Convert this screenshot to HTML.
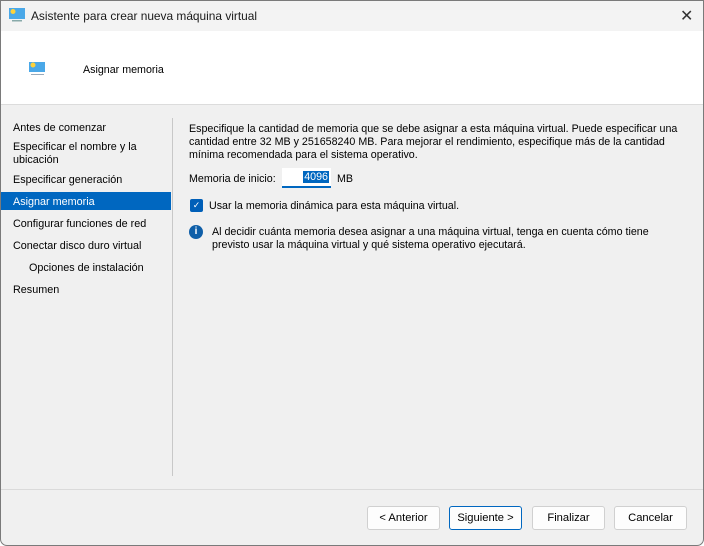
<!DOCTYPE html>
<html><head><meta charset="utf-8"><style>
*{margin:0;padding:0;box-sizing:border-box}
body{width:704px;height:546px;background:#fff;font-family:"Liberation Sans",sans-serif;font-size:11px;color:#000;position:relative;overflow:hidden}
.win{position:absolute;left:0;top:0;width:704px;height:546px;border:1px solid #7a7a7a;border-radius:0 0 7px 7px;background:#f0f0f0;overflow:hidden}
.title{position:absolute;left:0;top:0;width:702px;height:30px;background:#f3f3f3}
.title span{position:absolute;left:30px;top:8px;font-size:11.9px;color:#1a1a1a}
.close{position:absolute;left:679px;top:5px;font-size:16px;color:#333}
.hdr{position:absolute;left:0;top:30px;width:702px;height:74px;background:#fff;border-bottom:1px solid #dcdcdc}
.hdr span{position:absolute;left:82px;top:33px;font-size:10.7px}
.nav div{position:absolute;left:12px;white-space:nowrap;font-size:10.8px}
.sel{position:absolute;left:0;top:191px;width:170px;height:18px;background:#0067c0}
.vl{position:absolute;left:171px;top:117px;width:1px;height:358px;background:#c8c8c8}
.hl{position:absolute;left:0;top:488px;width:702px;height:1px;background:#dadada}
.p{position:absolute;left:188px;white-space:nowrap;font-size:10.7px}
.btn{position:absolute;top:505px;height:24px;width:73px;background:#fdfdfd;border:1px solid #d0d0d0;border-radius:3px;text-align:center;line-height:22px;font-size:11.2px}
</style></head><body><div class="win">
<div class="title">
<svg style="position:absolute;left:8px;top:7px" width="17" height="15"><rect x="0" y="0" width="16" height="11" fill="#4aa8e8"/><circle cx="4" cy="3.5" r="2.5" fill="#ffd23a"/><rect x="3" y="12" width="10" height="1.5" fill="#8aa"/></svg>
<span>Asistente para crear nueva máquina virtual</span><div class="close">✕</div></div>
<div class="hdr"><svg style="position:absolute;left:28px;top:31px" width="17" height="14"><rect x="0" y="0" width="16" height="10" fill="#4aa8e8"/><circle cx="4" cy="3" r="2.5" fill="#ffd23a"/><rect x="2" y="12" width="13" height="1" fill="#9ab"/></svg><span>Asignar memoria</span></div>
<div class="sel"></div>
<div class="nav">
<div style="top:121px">Antes de comenzar</div>
<div style="top:140px">Especificar el nombre y la</div>
<div style="top:153px">ubicación</div>
<div style="top:173px">Especificar generación</div>
<div style="top:195px;color:#fff">Asignar memoria</div>
<div style="top:217px">Configurar funciones de red</div>
<div style="top:239px">Conectar disco duro virtual</div>
<div style="top:261px;left:28px">Opciones de instalación</div>
<div style="top:283px">Resumen</div>
</div>
<div class="vl"></div>
<div class="p" style="top:122px">Especifique la cantidad de memoria que se debe asignar a esta máquina virtual. Puede especificar una</div>
<div class="p" style="top:135px">cantidad entre 32 MB y 251658240 MB. Para mejorar el rendimiento, especifique más de la cantidad</div>
<div class="p" style="top:148px">mínima recomendada para el sistema operativo.</div>
<div class="p" style="top:172px">Memoria de inicio:</div>
<div style="position:absolute;left:281px;top:167px;width:49px;height:20px;background:#fff;border-bottom:2px solid #0067c0"><span style="position:absolute;right:2px;top:3px;background:#0067c0;color:#fff;padding:0 1px;font-size:10.7px">4096</span></div>
<div class="p" style="left:336px;top:172px">MB</div>
<div style="position:absolute;left:189px;top:198px;width:13px;height:13px;background:#005fb8;border-radius:2px;color:#fff;font-size:9px;text-align:center;line-height:13px">✓</div>
<div class="p" style="left:208px;top:199px">Usar la memoria dinámica para esta máquina virtual.</div>
<div style="position:absolute;left:188px;top:224px;width:14px;height:14px;border-radius:50%;background:#0f5fa8;color:#fff;font-weight:bold;font-size:10px;text-align:center;line-height:14px">i</div>
<div class="p" style="left:211px;top:225px">Al decidir cuánta memoria desea asignar a una máquina virtual, tenga en cuenta cómo tiene</div>
<div class="p" style="left:211px;top:238px">previsto usar la máquina virtual y qué sistema operativo ejecutará.</div>
<div class="hl"></div>
<div class="btn" style="left:366px">&lt; Anterior</div>
<div class="btn" style="left:448px;border-color:#0067c0">Siguiente &gt;</div>
<div class="btn" style="left:531px">Finalizar</div>
<div class="btn" style="left:613px">Cancelar</div>
</div></body></html>
